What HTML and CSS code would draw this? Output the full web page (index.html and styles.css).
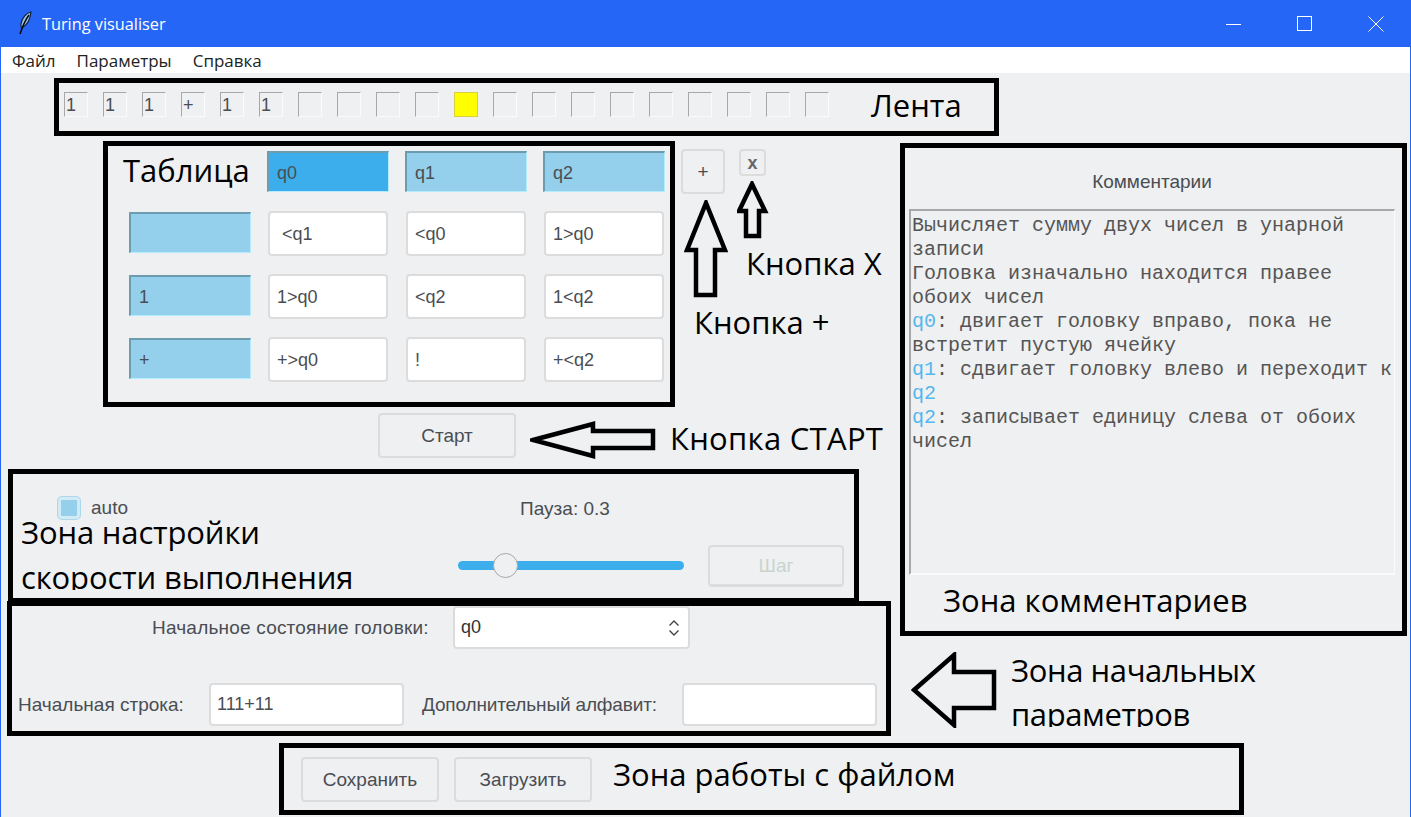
FILE: index.html
```html
<!DOCTYPE html>
<html lang="ru">
<head>
    <meta charset="UTF-8">
    <title>Turing visualiser</title>
    <link rel="stylesheet" href="styles.css">
</head>
<body>
    <div class="window">
        <header class="titlebar">
            <svg class="app-icon" width="16" height="24" viewBox="0 0 16 24">
                <path d="M14 1C9 2 5 7 4 13c-.3 2 0 3 .5 4C9 15 13 9 14 1z" fill="#9cc3e6" stroke="#10203a" stroke-width="1.2"/>
                <path d="M12 4C9 8 6 14 3 23" fill="none" stroke="#000" stroke-width="1.4"/>
            </svg>
            <span class="app-title">Turing visualiser</span>
            <div class="win-controls">
                <svg width="16" height="16" viewBox="0 0 16 16"><path d="M0 8.5h15" stroke="#fff" fill="none"/></svg>
                <svg width="16" height="16" viewBox="0 0 16 16"><rect x=".5" y=".5" width="14" height="14" stroke="#fff" fill="none"/></svg>
                <svg width="16" height="16" viewBox="0 0 16 16"><path d="M.5.5l15 15M15.500.5l-15 15" stroke="#fff" fill="none"/></svg>
            </div>
        </header>
        <nav class="menubar">
            <span>Файл</span>
            <span>Параметры</span>
            <span>Справка</span>
        </nav>

        <main class="content">
            <section class="zone tape">
                <div class="tape-cell">1</div>
                <div class="tape-cell">1</div>
                <div class="tape-cell">1</div>
                <div class="tape-cell">+</div>
                <div class="tape-cell">1</div>
                <div class="tape-cell">1</div>
                <div class="tape-cell"></div>
                <div class="tape-cell"></div>
                <div class="tape-cell"></div>
                <div class="tape-cell"></div>
                <div class="tape-cell head"></div>
                <div class="tape-cell"></div>
                <div class="tape-cell"></div>
                <div class="tape-cell"></div>
                <div class="tape-cell"></div>
                <div class="tape-cell"></div>
                <div class="tape-cell"></div>
                <div class="tape-cell"></div>
                <div class="tape-cell"></div>
                <div class="tape-cell"></div>
                <span class="note tape-note">Лента</span>
            </section>

            <div class="workspace">
                <div class="left-col">
                    <div class="table-row">
                        <section class="zone table-zone">
                            <div class="note table-note">Таблица</div>
                            <div class="state active">q0</div>
                            <div class="state">q1</div>
                            <div class="state">q2</div>

                            <div class="state symbol"></div>
                            <input class="field rule" value=" <q1">
                            <input class="field rule" value="<q0">
                            <input class="field rule" value="1>q0">

                            <div class="state symbol">1</div>
                            <input class="field rule" value="1>q0">
                            <input class="field rule" value="<q2">
                            <input class="field rule" value="1<q2">

                            <div class="state symbol">+</div>
                            <input class="field rule" value="+>q0">
                            <input class="field rule" value="!">
                            <input class="field rule" value="+<q2">
                        </section>
                        <button class="btn add-btn">+</button>
                        <button class="btn del-btn">x</button>
                    </div>

                    <button class="btn start-btn">Старт</button>

                    <section class="zone speed">
                        <div class="auto-col">
                            <label class="auto"><span class="check"></span>auto</label>
                        </div>
                        <div class="pause-col">
                            <div class="pause-label">Пауза: 0.3</div>
                            <div class="slider"><span class="thumb"></span></div>
                        </div>
                        <button class="btn step-btn">Шаг</button>
                        <div class="note speed-note">Зона настройки<br>скорости выполнения</div>
                    </section>

                    <section class="zone params">
                        <div class="params-top">
                            <span class="ui-label state-label">Начальное состояние головки:</span>
                            <div class="field select">q0
                                <svg width="12" height="20" viewBox="0 0 12 20"><path d="M1.500 7.500L6 3l4.500 4.500M1.500 12.500L6 17l4.500-4.500" fill="none" stroke="#444" stroke-width="1.400"/></svg>
                            </div>
                        </div>
                        <div class="params-bottom">
                            <span class="ui-label line-label">Начальная строка:</span>
                            <input class="field line-input" value="111+11">
                            <span class="ui-label alpha-label">Дополнительный алфавит:</span>
                            <input class="field alpha-input" value="">
                        </div>
                    </section>
                </div>

                <div class="right-col">
                    <section class="zone comments">
                        <div class="comments-title">Комментарии</div>
                        <div class="comments-text">
                            <p>Вычисляет сумму двух чисел в унарной записи</p>
                            <p>Головка изначально находится правее обоих чисел</p>
                            <p><span class="q">q0</span>: двигает головку вправо, пока не встретит пустую ячейку</p>
                            <p><span class="q">q1</span>: сдвигает головку влево и переходит к <span class="q">q2</span></p>
                            <p><span class="q">q2</span>: записывает единицу слева от обоих чисел</p>
                        </div>
                        <div class="note comments-note">Зона комментариев</div>
                    </section>
                    <div class="note params-note">Зона начальных<br>параметров</div>
                </div>
            </div>

            <section class="zone file-zone">
                <button class="btn file-btn">Сохранить</button>
                <button class="btn file-btn">Загрузить</button>
                <span class="note file-note">Зона работы с файлом</span>
            </section>

            <!-- подписи и стрелки поверх интерфейса -->
            <div class="note callout callout-x">Кнопка X</div>
            <div class="note callout callout-plus">Кнопка +</div>
            <div class="note callout callout-start">Кнопка СТАРТ</div>

            <svg class="arrow arrow-plus" width="44" height="100" viewBox="0 0 44 100">
                <path d="M22 3L41 50H31V95H12V50H3z"/>
            </svg>
            <svg class="arrow arrow-x" width="32" height="60" viewBox="0 0 32 60">
                <path d="M15 3L28 30H22V55H9V30H2z"/>
            </svg>
            <svg class="arrow arrow-start" width="126" height="38" viewBox="0 0 126 38">
                <path d="M3 19L63 3V10H123V27H63V35z"/>
            </svg>
            <svg class="arrow arrow-params" width="86" height="76" viewBox="0 0 86 76">
                <path d="M3 38L43 3V20H83V56H43V73z"/>
            </svg>
        </main>
    </div>
</body>
</html>
```

FILE: styles.css
```css
* {
    box-sizing: border-box;
}

body {
    margin: 0;
    font-family: "Liberation Sans", Arial, sans-serif;
    color: #4a4d52;
}

.window {
    width: 1411px;
    height: 817px;
    overflow: hidden;
    background: #eff0f2;
    border-left: 1px solid #2666f6;
    border-right: 1px solid #2666f6;
}

/* заголовок окна */
.titlebar {
    height: 47px;
    display: flex;
    align-items: center;
    padding-left: 16px;
    background: #2666f6;
    color: #fff;
}

.app-icon {
    margin-top: -1px;
}

.app-title {
    margin-left: 9px;
    margin-top: 1px;
    font-family: "Open Sans", sans-serif;
    font-size: 16.300px;
}

.win-controls {
    margin-left: auto;
    display: flex;
    gap: 55px;
    padding-right: 26px;
}

.menubar {
    height: 26px;
    display: flex;
    align-items: center;
    gap: 21px;
    padding-left: 11px;
    background: #fff;
    color: #222;
    font-family: "Open Sans", sans-serif;
    font-size: 17px;
}

.content {
    position: relative;
    height: 744px;
    padding-top: 5px;
}

.zone {
    border: 5px solid #000;
}

.note {
    font-family: "Open Sans", sans-serif;
    font-size: 31px;
    line-height: 45px;
    color: #000;
}

/* лента */
.tape {
    width: 945px;
    height: 58px;
    margin-left: 53px;
    display: flex;
    align-items: flex-start;
    gap: 15px;
    padding: 9px 0 0 5px;
}

.tape-cell {
    width: 24px;
    height: 25px;
    padding-left: 1px;
    border: 1px solid;
    border-color: #a8a8a8 #fbfbfb #fbfbfb #a8a8a8;
    font-size: 18px;
    line-height: 25px;
}

.tape-cell.head {
    background: #ff0;
    border-color: #d8d040;
}

.tape-note {
    margin-left: 27px;
    margin-top: -9px;
}

.workspace {
    display: grid;
    grid-template-columns: 899px 1fr;
    margin-top: 5px;
}

/* таблица */
.table-row {
    display: flex;
    align-items: flex-start;
}

.table-zone {
    width: 572px;
    height: 266px;
    margin-left: 102px;
    padding: 5px 0 0 21px;
    display: grid;
    grid-template-columns: repeat(4, 122px);
    grid-template-rows: 61px 63px 63px 63px;
    column-gap: 16px;
    align-items: start;
}

.table-note {
    margin-left: -6px;
    margin-top: -3px;
    white-space: nowrap;
}

.state {
    height: 41px;
    padding-left: 8px;
    background: #94cfeb;
    border-top: 2px solid #6d9bb0;
    border-left: 2px solid #6d9bb0;
    border-right: 1px solid #b4ecff;
    border-bottom: 1px solid #b4ecff;
    font-size: 18px;
    line-height: 40px;
}

.state.active {
    background: #3daeec;
}

.field {
    height: 43px;
    background: #fff;
    border: 2px solid #dcdcdc;
    border-radius: 4px;
    font-family: "Liberation Sans", Arial, sans-serif;
    font-size: 18px;
    color: #4a4d52;
    padding: 0 6px;
    outline: none;
}

.rule {
    width: 120px;
    height: 45px;
    margin: -1px 0 0 1px;
    padding: 1px 7px 0;
}

.btn {
    background: #eff0f2;
    border: 2px solid #dcdcdc;
    border-radius: 4px;
    font-family: "Liberation Sans", Arial, sans-serif;
    font-size: 19px;
    color: #4a4d52;
    padding: 1px 0 0;
}

.add-btn {
    width: 44px;
    height: 45px;
    margin: 8px 0 0 6px;
}

.del-btn {
    width: 27px;
    height: 27px;
    margin: 8px 0 0 14px;
    font-size: 18px;
    font-weight: bold;
    color: #666;
}

.start-btn {
    display: block;
    width: 138px;
    height: 45px;
    margin: 6px 0 11px 377px;
}

/* скорость */
.speed {
    position: relative;
    width: 851px;
    height: 134px;
    margin-left: 7px;
    display: flex;
    align-items: flex-start;
}

.auto-col {
    width: 440px;
    padding: 23px 0 0 45px;
}

.auto {
    display: flex;
    align-items: center;
    gap: 11px;
    font-size: 19px;
}

.check {
    width: 22px;
    height: 22px;
    border: 3px solid #d3e9f5;
    border-radius: 4px;
    background: #94cfeb;
    box-shadow: 0 0 0 1px #aed7ec;
}

.pause-col {
    width: 226px;
    padding-top: 23px;
    margin-left: 5px;
}

.pause-label {
    padding-right: 12px;
    text-align: center;
    font-size: 19px;
    line-height: 24px;
}

.slider {
    position: relative;
    height: 9px;
    margin-top: 40px;
    border-radius: 5px;
    background: #3daeec;
}

.thumb {
    position: absolute;
    left: 35px;
    top: -8px;
    width: 25px;
    height: 25px;
    border-radius: 50%;
    background: #eff0f2;
    border: 1px solid #a8a8a8;
}

.step-btn {
    width: 136px;
    height: 42px;
    margin: 71px 0 0 24px;
    color: #c8d4cc;
    border-bottom-width: 3px;
}

.speed-note {
    position: absolute;
    left: 8px;
    top: 36px;
    height: 80px;
    overflow: hidden;
    white-space: nowrap;
    letter-spacing: -0.150px;
}

/* начальные параметры */
.params {
    width: 884px;
    height: 135px;
    margin: -2px 0 0 6px;
}

.ui-label {
    font-size: 19px;
    white-space: nowrap;
}

.params-top {
    display: flex;
    align-items: center;
    padding-left: 140px;
    height: 43px;
}

.state-label {
    width: 276px;
    margin-right: 25px;
    letter-spacing: 0.200px;
}

.select {
    width: 237px;
    display: flex;
    align-items: center;
    justify-content: space-between;
    padding-right: 8px;
    color: #333;
}

.params-bottom {
    display: flex;
    align-items: center;
    margin-top: 34px;
    padding-left: 6px;
}

.line-label {
    width: 167px;
}

.alpha-label {
    width: 236px;
    letter-spacing: -0.150px;
}

.line-input {
    width: 195px;
    margin: 0 18px 0 24px;
}

.alpha-input {
    width: 195px;
    margin-left: 24px;
}

/* комментарии */
.comments {
    position: relative;
    width: 507px;
    height: 493px;
    margin-top: 2px;
    padding: 0 0 0 4px;
}

.comments-title {
    text-align: center;
    font-size: 19px;
    line-height: 67px;
    padding-right: 7px;
    height: 61px;
}

.comments-text {
    width: 486px;
    height: 366px;
    padding: 3px 0 0 1px;
    border: 1px solid;
    border-width: 2px 1px 2px 2px;
    border-color: #a8a8a8 #fbfbfb #fbfbfb #a8a8a8;
    font-family: "Liberation Mono", monospace;
    font-size: 20px;
    line-height: 24px;
    color: #555;
}

.comments-text p {
    margin: 0;
}

.q {
    color: #56b7ec;
}

.comments-note {
    position: absolute;
    left: 38px;
    top: 430px;
    white-space: nowrap;
}

.params-note {
    height: 79px;
    margin: 12px 0 0 111px;
    line-height: 44px;
    overflow: hidden;
    letter-spacing: -0.400px;
}

/* работа с файлом */
.file-zone {
    width: 965px;
    height: 72px;
    margin: 7px 0 0 278px;
    display: flex;
    align-items: center;
    gap: 15px;
    padding-left: 17px;
}

.file-btn {
    width: 138px;
    height: 45px;
}

.file-note {
    margin-left: 6px;
    margin-top: -10px;
}

/* подписи и стрелки */
.callout {
    position: absolute;
    white-space: nowrap;
}

.callout-x {
    left: 745px;
    top: 168px;
}

.callout-plus {
    left: 693px;
    top: 227px;
}

.callout-start {
    left: 669px;
    top: 343px;
    letter-spacing: 0.300px;
}

.arrow {
    position: absolute;
    fill: none;
    stroke: #000;
    stroke-width: 4.500;
}

.arrow-plus {
    left: 683px;
    top: 127px;
}

.arrow-x {
    left: 736px;
    top: 108px;
}

.arrow-start {
    left: 529px;
    top: 348px;
}

.arrow-params {
    left: 910px;
    top: 579px;
}
```
